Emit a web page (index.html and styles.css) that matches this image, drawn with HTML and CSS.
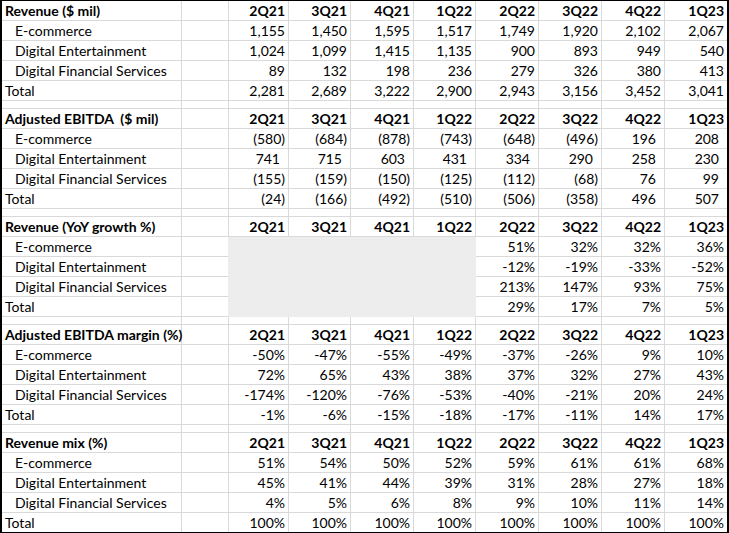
FILE: index.html
```html
<!DOCTYPE html>
<html>
<head>
<meta charset="utf-8">
<link rel="stylesheet" href="styles.css">
</head>
<body>
<div class="sheet">
<table class="grid">
<colgroup>
<col class="c-label"><col class="c-gap"><col class="c-q1"><col class="c-q2"><col class="c-q3"><col class="c-q4"><col class="c-q5"><col class="c-q6"><col class="c-q7"><col class="c-q8">
</colgroup>
<tbody>
<tr class="head"><td class="label">Revenue ($ mil)</td><td></td><td>2Q21</td><td>3Q21</td><td>4Q21</td><td>1Q22</td><td>2Q22</td><td>3Q22</td><td>4Q22</td><td>1Q23</td></tr>
<tr><td class="label sub">E-commerce</td><td></td><td>1,155</td><td>1,450</td><td>1,595</td><td>1,517</td><td>1,749</td><td>1,920</td><td>2,102</td><td>2,067</td></tr>
<tr><td class="label sub">Digital Entertainment</td><td></td><td>1,024</td><td>1,099</td><td>1,415</td><td>1,135</td><td>900</td><td>893</td><td>949</td><td>540</td></tr>
<tr><td class="label sub">Digital Financial Services</td><td></td><td>89</td><td>132</td><td>198</td><td>236</td><td>279</td><td>326</td><td>380</td><td>413</td></tr>
<tr><td class="label">Total</td><td></td><td>2,281</td><td>2,689</td><td>3,222</td><td>2,900</td><td>2,943</td><td>3,156</td><td>3,452</td><td>3,041</td></tr>
<tr class="spacer"><td></td><td></td><td></td><td></td><td></td><td></td><td></td><td></td><td></td><td></td></tr>

<tr class="head"><td class="label">Adjusted EBITDA&nbsp; ($ mil)</td><td></td><td>2Q21</td><td>3Q21</td><td>4Q21</td><td>1Q22</td><td>2Q22</td><td>3Q22</td><td>4Q22</td><td>1Q23</td></tr>
<tr><td class="label sub">E-commerce</td><td></td><td>(580)</td><td>(684)</td><td>(878)</td><td>(743)</td><td>(648)</td><td>(496)</td><td class="pos">196</td><td class="pos">208</td></tr>
<tr><td class="label sub">Digital Entertainment</td><td></td><td class="pos">741</td><td class="pos">715</td><td class="pos">603</td><td class="pos">431</td><td class="pos">334</td><td class="pos">290</td><td class="pos">258</td><td class="pos">230</td></tr>
<tr><td class="label sub">Digital Financial Services</td><td></td><td>(155)</td><td>(159)</td><td>(150)</td><td>(125)</td><td>(112)</td><td>(68)</td><td class="pos">76</td><td class="pos">99</td></tr>
<tr><td class="label">Total</td><td></td><td>(24)</td><td>(166)</td><td>(492)</td><td>(510)</td><td>(506)</td><td>(358)</td><td class="pos">496</td><td class="pos">507</td></tr>
<tr class="spacer"><td></td><td></td><td></td><td></td><td></td><td></td><td></td><td></td><td></td><td></td></tr>

<tr class="head"><td class="label">Revenue (YoY growth %)</td><td></td><td>2Q21</td><td>3Q21</td><td>4Q21</td><td>1Q22</td><td>2Q22</td><td>3Q22</td><td>4Q22</td><td>1Q23</td></tr>
<tr><td class="label sub">E-commerce</td><td class="na-edge"></td><td class="na"></td><td class="na"></td><td class="na"></td><td class="na"></td><td>51%</td><td>32%</td><td>32%</td><td>36%</td></tr>
<tr><td class="label sub">Digital Entertainment</td><td class="na-edge"></td><td class="na"></td><td class="na"></td><td class="na"></td><td class="na"></td><td>-12%</td><td>-19%</td><td>-33%</td><td>-52%</td></tr>
<tr><td class="label sub">Digital Financial Services</td><td class="na-edge"></td><td class="na"></td><td class="na"></td><td class="na"></td><td class="na"></td><td>213%</td><td>147%</td><td>93%</td><td>75%</td></tr>
<tr><td class="label">Total</td><td class="na-edge"></td><td class="na"></td><td class="na"></td><td class="na"></td><td class="na"></td><td>29%</td><td>17%</td><td>7%</td><td>5%</td></tr>
<tr class="spacer"><td></td><td></td><td></td><td></td><td></td><td></td><td></td><td></td><td></td><td></td></tr>

<tr class="head"><td class="label">Adjusted EBITDA margin (%)</td><td></td><td>2Q21</td><td>3Q21</td><td>4Q21</td><td>1Q22</td><td>2Q22</td><td>3Q22</td><td>4Q22</td><td>1Q23</td></tr>
<tr><td class="label sub">E-commerce</td><td></td><td>-50%</td><td>-47%</td><td>-55%</td><td>-49%</td><td>-37%</td><td>-26%</td><td>9%</td><td>10%</td></tr>
<tr><td class="label sub">Digital Entertainment</td><td></td><td>72%</td><td>65%</td><td>43%</td><td>38%</td><td>37%</td><td>32%</td><td>27%</td><td>43%</td></tr>
<tr><td class="label sub">Digital Financial Services</td><td></td><td>-174%</td><td>-120%</td><td>-76%</td><td>-53%</td><td>-40%</td><td>-21%</td><td>20%</td><td>24%</td></tr>
<tr><td class="label">Total</td><td></td><td>-1%</td><td>-6%</td><td>-15%</td><td>-18%</td><td>-17%</td><td>-11%</td><td>14%</td><td>17%</td></tr>
<tr class="spacer"><td></td><td></td><td></td><td></td><td></td><td></td><td></td><td></td><td></td><td></td></tr>

<tr class="head"><td class="label">Revenue mix (%)</td><td></td><td>2Q21</td><td>3Q21</td><td>4Q21</td><td>1Q22</td><td>2Q22</td><td>3Q22</td><td>4Q22</td><td>1Q23</td></tr>
<tr><td class="label sub">E-commerce</td><td></td><td>51%</td><td>54%</td><td>50%</td><td>52%</td><td>59%</td><td>61%</td><td>61%</td><td>68%</td></tr>
<tr><td class="label sub">Digital Entertainment</td><td></td><td>45%</td><td>41%</td><td>44%</td><td>39%</td><td>31%</td><td>28%</td><td>27%</td><td>18%</td></tr>
<tr><td class="label sub">Digital Financial Services</td><td></td><td>4%</td><td>5%</td><td>6%</td><td>8%</td><td>9%</td><td>10%</td><td>11%</td><td>14%</td></tr>
<tr class="last"><td class="label">Total</td><td></td><td>100%</td><td>100%</td><td>100%</td><td>100%</td><td>100%</td><td>100%</td><td>100%</td><td>100%</td></tr>
</tbody>
</table>
</div>
</body>
</html>
```

FILE: styles.css
```css
html, body {
  margin: 0;
  padding: 0;
  background: #ffffff;
}

.sheet {
  width: 729px;
  box-sizing: border-box;
  border: 2px solid #000000;
  border-top-width: 1px;
  font-family: Lato, "Liberation Sans", sans-serif;
  font-size: 14px;
  color: #000000;
}

.grid {
  border-collapse: separate;
  border-spacing: 0;
  table-layout: fixed;
  width: 725px;
}

.c-label { width: 180px; }
.c-gap { width: 47px; }
.c-q1 { width: 60px; }
.c-q2 { width: 62px; }
.c-q3 { width: 63px; }
.c-q4 { width: 62px; }
.c-q5 { width: 63px; }
.c-q6 { width: 63px; }
.c-q7 { width: 63px; }
.c-q8 { width: 62px; }

.grid td {
  box-sizing: border-box;
  height: 20px;
  padding: 0 3px 0 0;
  border-right: 1px solid #d9d9d9;
  border-bottom: 1px solid #d9d9d9;
  text-align: right;
  white-space: nowrap;
  overflow: visible;
  line-height: 19px;
  vertical-align: middle;
}

.grid td:last-child {
  border-right: none;
}

.grid td.label {
  text-align: left;
  padding: 0 0 0 3px;
}

.grid td.sub {
  padding-left: 13px;
}

.grid td.pos {
  padding-right: 8px;
}

.head td {
  font-weight: bold;
}

.spacer td {
  height: 8px;
  line-height: 0;
  font-size: 0;
}

.last td {
  height: 19px;
  border-bottom: none;
}

.grid td.na {
  background: #ededed;
  border-right-color: #ededed;
  border-bottom-color: #ededed;
}

.grid td.na-edge {
  border-right-color: #ededed;
}
```
